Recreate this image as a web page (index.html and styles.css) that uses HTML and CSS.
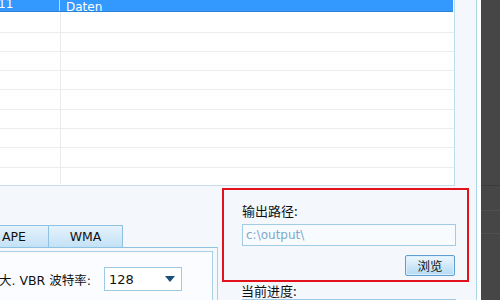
FILE: index.html
```html
<!DOCTYPE html>
<html>
<head>
<meta charset="utf-8">
<link rel="stylesheet" href="styles.css">
</head>
<body>
<div class="window">
  <div class="top">
    <div class="table">
      <div class="thead">
        <div class="c1">11</div>
        <div class="c2">Daten</div>
      </div>
      <div class="row first"><div class="c1"></div><div class="c2"></div></div>
      <div class="row"><div class="c1"></div><div class="c2"></div></div>
      <div class="row"><div class="c1"></div><div class="c2"></div></div>
      <div class="row"><div class="c1"></div><div class="c2"></div></div>
      <div class="row"><div class="c1"></div><div class="c2"></div></div>
      <div class="row"><div class="c1"></div><div class="c2"></div></div>
      <div class="row"><div class="c1"></div><div class="c2"></div></div>
      <div class="row"><div class="c1"></div><div class="c2"></div></div>
      <div class="row last"><div class="c1"></div><div class="c2"></div></div>
    </div>
  </div>
  <div class="bottom">
    <div class="left">
      <div class="tabs">
        <div class="tab ape">APE</div>
        <div class="tab wma">WMA</div>
      </div>
      <div class="tabpanel">
        <div class="group">
          <div class="line">
            <span class="lbl">大. VBR 波特率:</span>
            <div class="select"><span>128</span><span class="arrow"></span></div>
          </div>
        </div>
      </div>
    </div>
    <div class="right">
      <div class="redbox">
        <div class="label">输出路径:</div>
        <div class="input">c:\output\</div>
        <div class="btnrow"><div class="btn">浏览</div></div>
      </div>
      <div class="label progress">当前进度:</div>
      <div class="input empty"></div>
    </div>
  </div>
</div>
<div class="gap"></div>
<div class="dark">
  <div class="dline l1"></div>
  <div class="dline l2"></div>
  <div class="dline l3"></div>
</div>
</body>
</html>
```

FILE: styles.css
```css
html, body {
  margin: 0;
  padding: 0;
  width: 500px;
  height: 300px;
  overflow: hidden;
}
body {
  display: flex;
  font-family: "DejaVu Sans", "Noto Sans CJK SC", sans-serif;
  background: #fff;
}
.window {
  width: 476px;
  height: 300px;
  background: #f4f8fd;
  border-right: 1px solid #a9d9e8;
  display: flex;
  flex-direction: column;
  overflow: hidden;
}
.top {
  height: 186px;
  flex: none;
}
.table {
  width: 454px;
  height: 185px;
  background: #fff;
  border-right: 1px solid #b9dcea;
  border-bottom: 1px solid #c9dfec;
  overflow: hidden;
}
.thead {
  display: flex;
  height: 11px;
  background: #3399fe;
  border-bottom: 1px solid #2b82d6;
  width: 453px;
  color: #fff;
  font-size: 12px;
  line-height: 8px;
  overflow: hidden;
  align-items: flex-end;
}
.thead .c1 {
  width: 59px;
  height: 11px;
  border-right: 1px solid #bcdcfb;
  text-indent: -2px;
  overflow: hidden;
}
.thead .c2 {
  padding-left: 6px;
}
.row {
  display: flex;
  height: 19.34px;
  border-bottom: 1px solid #ececec;
  box-sizing: border-box;
}
.row.first {
  height: 20.5px;
}
.row.last {
  border-bottom: none;
  height: 18px;
}
.row .c1 {
  width: 60px;
  border-right: 1px solid #e9e9e9;
}
.row.last .c1 {
  height: 16px;
}
.bottom {
  display: flex;
  flex: 1;
}
.left {
  width: 222px;
  flex: none;
  display: flex;
  flex-direction: column;
}
.tabs {
  display: flex;
  margin-top: 38px;
  height: 23px;
}
.tab {
  height: 22px;
  box-sizing: border-box;
  border: 1px solid #8fc2e2;
  border-bottom: none;
  background: linear-gradient(#e6f3fc, #c3e1f6);
  font-family: "DejaVu Sans", sans-serif;
  font-size: 12.5px;
  line-height: 22px;
  color: #111;
  margin-top: 1px;
}
.tab.ape {
  width: 50px;
  margin-left: -1px;
  border-left: none;
  padding-left: 3px;
}
.tab.wma {
  width: 74px;
  text-align: center;
  border-left: none;
}
.tabpanel {
  width: 217px;
  border-top: 1px solid #8fc2e2;
  border-right: 1px solid #a9d0e8;
  flex: 1;
  padding-top: 3px;
}
.group {
  width: 213px;
  height: 60px;
  border: 1px solid #a9cfe6;
  border-left: none;
  background: #fafcff;
  padding-top: 15px;
  box-sizing: border-box;
}
.line {
  display: flex;
  align-items: center;
}
.lbl {
  font-family: "DejaVu Sans", "Noto Sans CJK SC", sans-serif;
  font-size: 12.5px;
  color: #111;
  width: 105px;
  white-space: nowrap;
  margin-left: -1px;
}
.select {
  width: 78px;
  height: 24px;
  box-sizing: border-box;
  border: 1px solid #9ec9e5;
  background: #fff;
  display: flex;
  align-items: center;
  justify-content: space-between;
  padding: 0 6px 0 4px;
  font-size: 13px;
  color: #111;
}
.arrow {
  width: 0;
  height: 0;
  border-left: 5px solid transparent;
  border-right: 5px solid transparent;
  border-top: 6px solid #1d4f7a;
}
.right {
  flex: 1;
  display: flex;
  flex-direction: column;
}
.redbox {
  margin-top: 2px;
  width: 247px;
  height: 94px;
  box-sizing: border-box;
  border: 2px solid #e1121c;
  padding: 13px 12px 0 18px;
}
.label {
  font-family: "Noto Sans CJK SC", sans-serif;
  font-size: 13px;
  color: #111;
  line-height: 16px;
  height: 18px;
}
.input {
  margin-top: 3px;
  width: 214px;
  height: 22px;
  box-sizing: border-box;
  border: 1px solid #a2cce6;
  background: #f8fbfe;
  color: #7fa9ca;
  font-size: 12px;
  line-height: 20px;
  padding-left: 3px;
}
.btnrow {
  display: flex;
  justify-content: flex-end;
  margin-top: 9px;
}
.btn {
  width: 50px;
  height: 21px;
  box-sizing: border-box;
  border: 1px solid #5f9fd0;
  border-radius: 2px;
  background: linear-gradient(#eef7fd, #b3d9f2);
  font-family: "Noto Sans CJK SC", sans-serif;
  font-size: 12.5px;
  line-height: 19px;
  text-align: center;
  color: #111;
  box-shadow: inset 0 0 0 1px #dcefff;
}
.progress {
  margin-top: 0;
  margin-left: 19px;
  line-height: 18px;
}
.input.empty {
  margin-left: 20px;
  margin-top: -1px;
}
.gap {
  width: 4px;
  background: #fff;
  flex: none;
}
.dark {
  flex: 1;
  background: #464646;
  display: flex;
  flex-direction: column;
}
.dline {
  height: 1px;
  background: #3b3b3b;
}
.l1 { margin-top: 185px; }
.l2 { margin-top: 24px; background: #505050; }
.l3 { margin-top: 22px; background: #505050; }
```
